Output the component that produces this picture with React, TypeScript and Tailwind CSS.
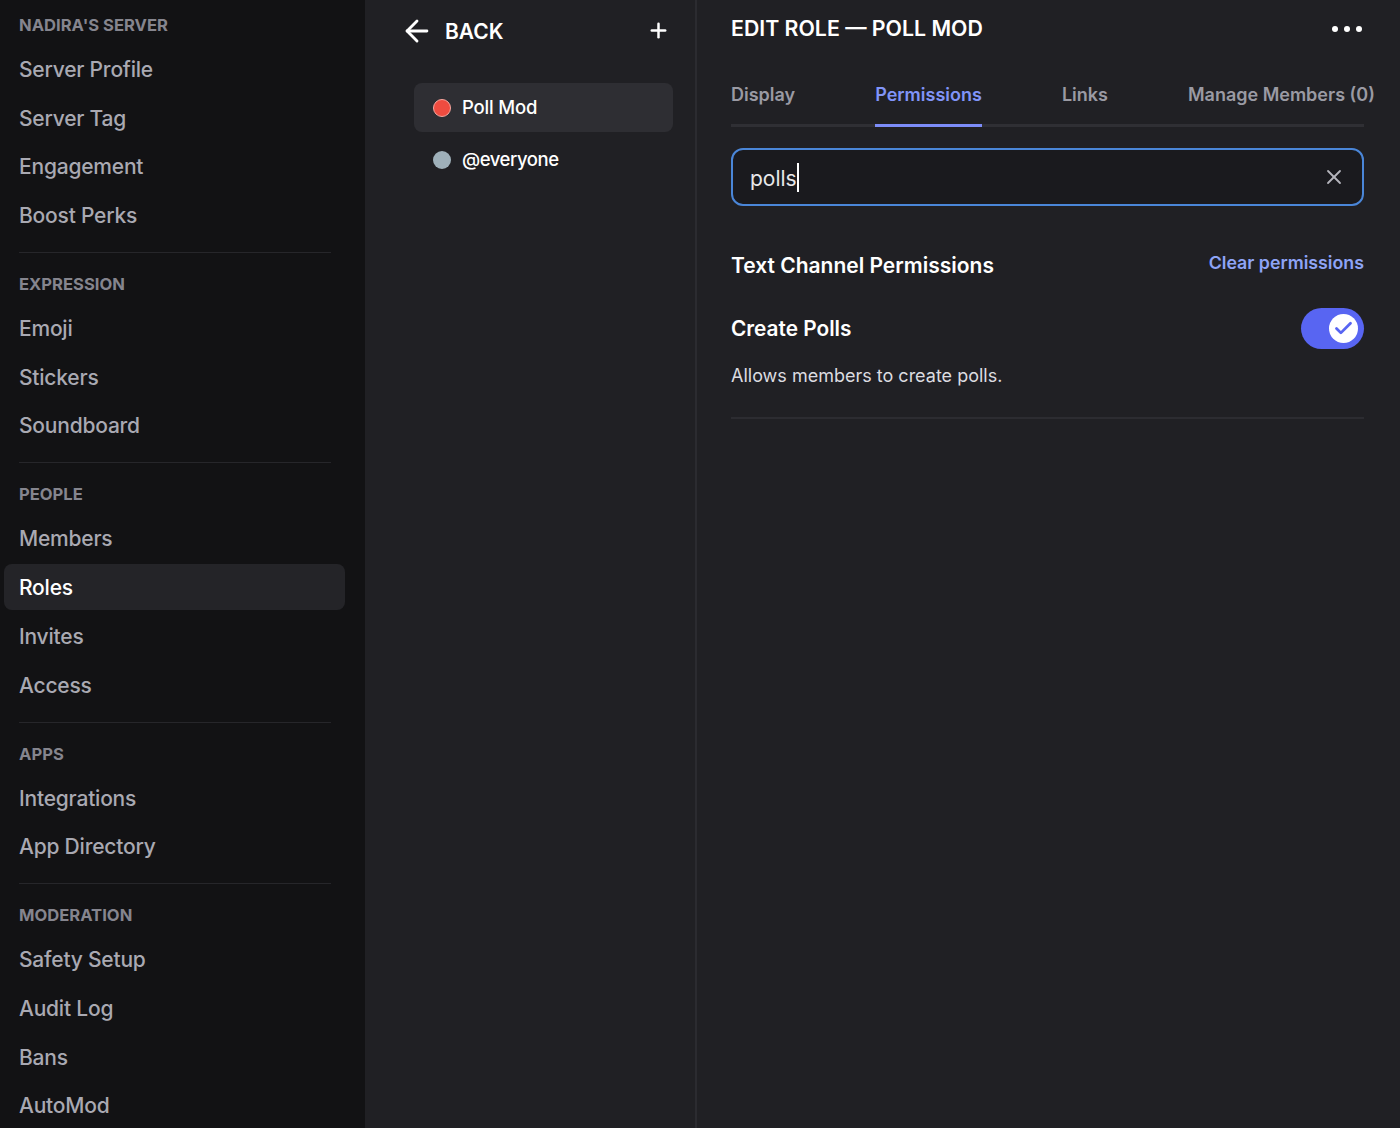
import { ArrowLeft, Check, Plus, X } from 'lucide-react';

const sections = [
  { title: "NADIRA'S SERVER", items: ['Server Profile', 'Server Tag', 'Engagement', 'Boost Perks'] },
  { title: 'EXPRESSION', items: ['Emoji', 'Stickers', 'Soundboard'] },
  { title: 'PEOPLE', items: ['Members', 'Roles', 'Invites', 'Access'] },
  { title: 'APPS', items: ['Integrations', 'App Directory'] },
  { title: 'MODERATION', items: ['Safety Setup', 'Audit Log', 'Bans', 'AutoMod'] },
];

const tabs = ['Display', 'Permissions', 'Links', 'Manage Members (0)'];

const Sidebar = () => (
  <div className="w-[365px] shrink-0 bg-[#121214] pt-[14px] pl-[4px] pr-[20px]">
    {sections.map((section, index) => (
      <div key={section.title}>
        <div className="h-[22px] mb-[10px] pl-[15px] text-[16.6px] leading-[22px] font-bold text-[#85858e]">
          {section.title}
        </div>
        <div className="flex flex-col gap-[2.7px]">
          {section.items.map((item) => (
            <div
              key={item}
              className={
                item === 'Roles'
                  ? 'h-[46px] pl-[15px] rounded-lg bg-[#242428] text-[21px] tracking-[-0.01em] leading-[47px] font-medium text-white'
                  : 'h-[46px] pl-[15px] text-[21px] tracking-[-0.01em] leading-[47px] font-medium text-[#a9a9b2]'
              }
            >
              {item}
            </div>
          ))}
        </div>
        {index < sections.length - 1 && (
          <div className="h-px bg-[#26262a] ml-[15px] mr-[14px] mt-[14px] mb-[20px]" />
        )}
      </div>
    ))}
  </div>
);

const RoleList = () => (
  <div className="w-[332px] shrink-0 border-r-2 border-[#2b2b30] pt-[15px]">
    <div className="h-[32px] flex items-center pl-[34.5px] pr-[25px]">
      <ArrowLeft size={34} strokeWidth={2} className="text-white" />
      <span className="ml-[11.5px] text-[21px] leading-[34px] translate-y-px font-semibold text-white">BACK</span>
      <Plus size={23} strokeWidth={2.6} className="ml-auto -translate-y-px text-white" />
    </div>
    <div className="mt-[36px] ml-[49px] mr-[22px] flex flex-col gap-[3px]">
      <div className="h-[49px] flex items-center pl-[19px] rounded-lg bg-[#2e2e33]">
        <span className="w-[18px] h-[18px] rounded-full bg-[#ef4c40] border border-[#f6a79f]" />
        <span className="ml-[11px] text-[18.5px] tracking-[-0.01em] font-medium text-white">Poll Mod</span>
      </div>
      <div className="h-[49px] flex items-center pl-[19px]">
        <span className="w-[18px] h-[18px] rounded-full bg-[#9fb0ba]" />
        <span className="ml-[11px] text-[18.5px] tracking-[-0.025em] font-medium text-white">@everyone</span>
      </div>
    </div>
  </div>
);

const EditRole = () => (
  <div className="flex-1 min-w-0 pl-[34px] pr-[36px] pt-[13px]">
    <div className="h-[32px] flex items-center justify-between pr-[2px]">
      <span className="text-[21.3px] font-semibold text-white whitespace-nowrap">EDIT ROLE — POLL MOD</span>
      <div className="flex gap-[6px]">
        <span className="w-[6px] h-[6px] rounded-full bg-white" />
        <span className="w-[6px] h-[6px] rounded-full bg-white" />
        <span className="w-[6px] h-[6px] rounded-full bg-white" />
      </div>
    </div>

    <div className="mt-[25px] h-[57px] flex gap-[80px] border-b-[3px] border-[#2f2f34] whitespace-nowrap">
      {tabs.map((tab) => (
        <div
          key={tab}
          className={
            tab === 'Permissions'
              ? 'h-[57px] pt-[10px] border-b-[3px] border-[#7c8cf8] text-[18px] leading-[30px] font-semibold text-[#8094f8]'
              : 'h-[57px] pt-[10px] text-[18px] leading-[30px] font-semibold text-[#9a9aa3]'
          }
        >
          {tab}
        </div>
      ))}
    </div>

    <div className="mt-[21px] h-[58px] flex items-center pl-[17px] pr-[16px] rounded-xl border-2 border-[#4a86d8] bg-[#1a1a1e]">
      <span className="text-[21px] leading-[32px] translate-y-[2px] text-[#e8e8ea]">polls</span>
      <span className="w-[2px] h-[29px] bg-white" />
      <X size={24} strokeWidth={1.8} className="ml-auto text-[#b5b5bc]" />
    </div>

    <div className="mt-[44px] h-[32px] flex justify-between">
      <span className="text-[21px] leading-[32px] font-semibold text-white">Text Channel Permissions</span>
      <span className="text-[17.8px] leading-[25px] font-semibold text-[#8ea4f6]">Clear permissions</span>
    </div>

    <div className="mt-[26px] h-[41px] flex items-center justify-between">
      <span className="text-[20.8px] font-semibold text-white">Create Polls</span>
      <div className="w-[63px] h-[41px] rounded-full bg-[#5865f2] flex items-center justify-end pr-[6px]">
        <span className="w-[29px] h-[29px] rounded-full bg-white flex items-center justify-center">
          <Check size={21} strokeWidth={3.2} className="text-[#5865f2]" />
        </span>
      </div>
    </div>

    <div className="mt-[13px] text-[18px] leading-[28px] text-[#dcdce0]">Allows members to create polls.</div>
    <div className="mt-[27px] h-[2px] bg-[#2c2c31]" />
  </div>
);

const App = () => (
  <div className="h-[1128px] w-[1400px] overflow-hidden flex bg-[#202024] font-['Inter','Noto_Sans',sans-serif]">
    <Sidebar />
    <RoleList />
    <EditRole />
  </div>
);

export default App;
